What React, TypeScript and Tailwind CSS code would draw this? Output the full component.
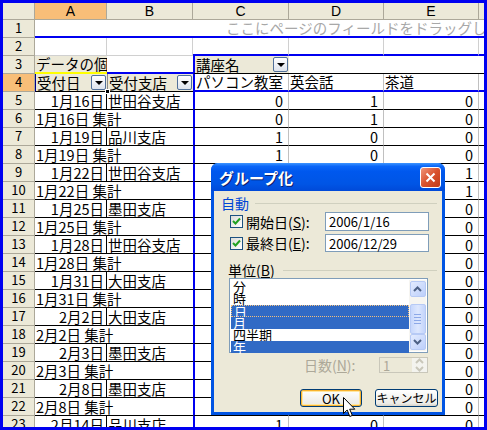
import React from 'react';

const JP = "font-['Noto_Sans_CJK_JP',sans-serif]";

// one spreadsheet detail / total row
type DataRow = { n: number; a?: string; b?: string; t?: string; c: string; d: string; e: string };

const rows: DataRow[] = [
  { n: 5, a: '1月16日', b: '世田谷支店', c: '0', d: '1', e: '0' },
  { n: 6, t: '1月16日 集計', c: '0', d: '1', e: '0' },
  { n: 7, a: '1月19日', b: '品川支店', c: '1', d: '0', e: '0' },
  { n: 8, t: '1月19日 集計', c: '1', d: '0', e: '0' },
  { n: 9, a: '1月22日', b: '世田谷支店', c: '0', d: '0', e: '1' },
  { n: 10, t: '1月22日 集計', c: '0', d: '0', e: '1' },
  { n: 11, a: '1月25日', b: '墨田支店', c: '1', d: '0', e: '0' },
  { n: 12, t: '1月25日 集計', c: '1', d: '0', e: '0' },
  { n: 13, a: '1月28日', b: '世田谷支店', c: '0', d: '1', e: '0' },
  { n: 14, t: '1月28日 集計', c: '0', d: '1', e: '0' },
  { n: 15, a: '1月31日', b: '大田支店', c: '1', d: '0', e: '0' },
  { n: 16, t: '1月31日 集計', c: '1', d: '0', e: '0' },
  { n: 17, a: '2月2日', b: '大田支店', c: '0', d: '1', e: '0' },
  { n: 18, t: '2月2日 集計', c: '0', d: '1', e: '0' },
  { n: 19, a: '2月3日', b: '墨田支店', c: '1', d: '0', e: '0' },
  { n: 20, t: '2月3日 集計', c: '1', d: '0', e: '0' },
  { n: 21, a: '2月8日', b: '墨田支店', c: '0', d: '1', e: '0' },
  { n: 22, t: '2月8日 集計', c: '0', d: '1', e: '0' },
  { n: 23, a: '2月14日', b: '品川支店', c: '1', d: '0', e: '0' },
];

const cell = 'box-border h-full shrink-0 flex items-end overflow-hidden whitespace-nowrap text-[14.5px] leading-[16px]';

function RowHead({ n, sel }: { n: number; sel?: boolean }) {
  return (
    <div
      className={`${cell} w-[32px] justify-center border-r border-b border-[#ACA899] !text-[13px] ${
        sel ? 'bg-[#F8BE78]' : 'bg-[#ECE9D8]'
      }`}
    >
      <span className="pb-[1px]">{n}</span>
    </div>
  );
}

function DropBtn() {
  return (
    <div className="ml-auto mb-[1px] mr-[1px] w-[15px] h-[15px] shrink-0 box-border rounded-[2px] border border-[#51709A] bg-[linear-gradient(180deg,#FFFFFF,#DDE3EC)] flex items-center justify-center">
      <div className="w-0 h-0 border-x-[4px] border-t-[4px] border-x-transparent border-t-black" />
    </div>
  );
}

function Check() {
  return (
    <div className="w-[13px] h-[13px] box-border border border-[#1C5180] bg-[linear-gradient(135deg,#DCDCD7,#FFFFFF)] flex items-center justify-center shrink-0">
      <svg width="9" height="9" viewBox="0 0 9 9">
        <path d="M1 4 L3.5 6.5 L8 1.5" stroke="#21A121" strokeWidth="2" fill="none" />
      </svg>
    </div>
  );
}

function Arrow({ up, color = '#4D6185' }: { up?: boolean; color?: string }) {
  return (
    <svg width="9" height="6" viewBox="0 0 9 6">
      <path d={up ? 'M1 5 L4.5 1.5 L8 5' : 'M1 1 L4.5 4.5 L8 1'} stroke={color} strokeWidth="2" fill="none" />
    </svg>
  );
}

function Dialog() {
  const items = [
    { t: '分' },
    { t: '時' },
    { t: '日', s: true, f: true },
    { t: '月', s: true },
    { t: '四半期' },
    { t: '年', s: true },
  ];
  return (
    <div className="absolute left-[208px] top-[160px] w-[234px] h-[252px] flex flex-col rounded-t-[7px] overflow-hidden bg-[#0054E3]">
      {/* title bar */}
      <div className="h-[28px] shrink-0 flex items-center pl-[8px] pr-[4px] bg-[linear-gradient(180deg,#3D95FF_0%,#0A66F8_12%,#0058EE_30%,#0055E5_75%,#0049D8_100%)]">
        <span className="text-white font-bold text-[15px] leading-none [text-shadow:1px_1px_0_#0A1E6C]">グループ化</span>
        <div className="ml-auto w-[21px] h-[21px] box-border rounded-[3px] border border-white bg-[linear-gradient(135deg,#F0967A,#D9522E_50%,#C13A17)] flex items-center justify-center">
          <svg width="11" height="11" viewBox="0 0 11 11">
            <path d="M1.5 1.5 L9.5 9.5 M9.5 1.5 L1.5 9.5" stroke="white" strokeWidth="2" />
          </svg>
        </div>
      </div>
      {/* body */}
      <div className="flex-1 mx-[3px] mb-[3px] bg-[#ECE9D8] flex flex-col pl-[7px] pr-[4px] text-[13px] leading-none">
        <div className="mt-[4px] h-[16px] flex items-center">
          <span className="text-[#0046D5] text-[14px]">自動</span>
          <div className="flex-1 h-px bg-[#D0D0BF] ml-[6px] mr-[1px]" />
        </div>
        <div className="mt-[1px] h-[19px] flex items-center">
          <div className="ml-[9px]"><Check /></div>
          <span className="ml-[3px] text-[14px]">
            開始日(<span className="underline">S</span>):
          </span>
          <div className="ml-auto mr-[9px] w-[104px] h-[19px] box-border border border-[#7F9DB9] bg-white flex items-center pl-[3px] text-[13px]">
            2006/1/16
          </div>
        </div>
        <div className="mt-[3px] h-[18px] flex items-center">
          <div className="ml-[9px]"><Check /></div>
          <span className="ml-[3px] text-[14px]">
            最終日(<span className="underline">E</span>):
          </span>
          <div className="ml-auto mr-[9px] w-[104px] h-[18px] box-border border border-[#7F9DB9] bg-white flex items-center pl-[3px] text-[13px]">
            2006/12/29
          </div>
        </div>
        <div className="mt-[12px] h-[12px] flex items-center">
          <span className="ml-[7px] text-[14px]">
            単位(<span className="underline">B</span>)
          </span>
          <div className="flex-1 h-px bg-[#D0D0BF] ml-[8px] mr-[1px]" />
        </div>
        <div className="mt-[2px] ml-[8px] w-[199px] h-[75px] box-border border border-[#7F9DB9] bg-white flex p-[1px]">
          <div className="flex-1 flex flex-col pt-[1px]">
            {items.map((it) => (
              <div
                key={it.t}
                className={`h-[12px] text-[13px] leading-[12px] box-border pl-[2px] ${
                  it.s ? 'bg-[#316AC5] text-white' : 'text-black'
                } ${it.f ? 'border border-dotted border-[#F0C080]' : ''}`}
              >
                {it.t}
              </div>
            ))}
          </div>
          <div className="w-[17px] bg-[#F6F5F1] flex flex-col items-center py-[1px]">
            <div className="w-[16px] h-[16px] box-border rounded-[2px] border border-[#B7CAF5] bg-[linear-gradient(135deg,#E3EBFE,#BCCFFB)] flex items-center justify-center">
              <Arrow up />
            </div>
            <div className="mt-[7px] w-[16px] h-[30px] box-border rounded-[2px] border border-[#B7CAF5] bg-[linear-gradient(90deg,#C7D7FC,#DDE7FE_50%,#C3D4FB)] flex flex-col items-center justify-center gap-[2px]">
              <div className="w-[7px] h-px bg-[#8CA8E8]" />
              <div className="w-[7px] h-px bg-[#8CA8E8]" />
              <div className="w-[7px] h-px bg-[#8CA8E8]" />
              <div className="w-[7px] h-px bg-[#8CA8E8]" />
            </div>
            <div className="mt-auto w-[16px] h-[16px] box-border rounded-[2px] border border-[#B7CAF5] bg-[linear-gradient(135deg,#E3EBFE,#BCCFFB)] flex items-center justify-center">
              <Arrow />
            </div>
          </div>
        </div>
        <div className="mt-[4px] h-[16px] flex items-center">
          <span className="ml-[83px] text-[#ACA899] text-[14px]">
            日数(<span className="underline">N</span>):
          </span>
          <div className="ml-auto mr-[10px] w-[49px] h-[16px] box-border border border-[#C9C7BA] bg-[#ECE9D8] flex items-center">
            <span className="pl-[3px] text-[#ACA899]">1</span>
            <div className="ml-auto w-[15px] h-full flex flex-col items-center justify-center gap-[2px] bg-[#F3F3EE]">
              <Arrow up color="#C9C7BA" />
              <Arrow color="#C9C7BA" />
            </div>
          </div>
        </div>
        <div className="mt-[16px] h-[18px] flex items-center justify-end gap-[13px]">
          <div className="w-[62px] h-[18px] box-border rounded-[3px] border border-[#003C74] bg-[linear-gradient(180deg,#FFFFFF,#ECEBE6_85%,#D6D0C5)] shadow-[inset_0_0_0_1px_#F8B330,inset_0_0_0_2px_#FFE7A2] flex items-center justify-center">
            OK
          </div>
          <div className="w-[63px] h-[18px] box-border rounded-[3px] border border-[#003C74] bg-[linear-gradient(180deg,#FFFFFF,#ECEBE6_85%,#D6D0C5)] flex items-center justify-center text-[12px]">
            キャンセル
          </div>
        </div>
      </div>
    </div>
  );
}

export default function App() {
  return (
    <div className={`w-[487px] h-[430px] box-border border-[3px] border-[#0000F0] relative overflow-hidden bg-white text-black ${JP}`}>
      {/* column headers */}
      <div className="flex h-[17px]">
        <div className={`${cell} w-[32px] bg-[#ECE9D8] border-r border-b border-[#ACA899]`} />
        {[
          ['A', 'w-[72px]', true],
          ['B', 'w-[86px]', false],
          ['C', 'w-[96px]', false],
          ['D', 'w-[95px]', false],
          ['E', 'w-[95px]', false],
        ].map(([l, w, s]) => (
          <div
            key={l as string}
            className={`${cell} ${w} justify-center items-center border-r border-b border-[#ACA899] font-['Liberation_Sans',sans-serif] !text-[14px] ${
              s ? 'bg-[#F8BE78]' : 'bg-[#ECE9D8]'
            }`}
          >
            {l}
          </div>
        ))}
        <div className={`${cell} w-[5px] bg-[#ECE9D8] border-b border-[#ACA899]`} />
      </div>

      {/* row 1: page field drop zone */}
      <div className="flex h-[18px]">
        <RowHead n={1} />
        <div className="box-border h-full w-[449px] border-b-2 border-[#0000F0] flex items-end overflow-hidden whitespace-nowrap pl-[191px] text-[14.5px] leading-[16px] text-[#A8A8A8]">
          ここにページのフィールドをドラッグします
        </div>
      </div>

      {/* row 2 */}
      <div className="flex h-[18px]">
        <RowHead n={2} />
        <div className={`${cell} w-[72px] border-r border-b border-[#D0D0D0]`} />
        <div className={`${cell} w-[86px] border-r border-b border-[#D0D0D0]`} />
        <div className={`${cell} w-[96px] border-r border-[#D0D0D0] border-b-2 border-b-[#0000F0]`} />
        <div className={`${cell} w-[95px] border-r border-[#D0D0D0] border-b-2 border-b-[#0000F0]`} />
        <div className={`${cell} w-[95px] border-r border-[#D0D0D0] border-b-2 border-b-[#0000F0]`} />
        <div className={`${cell} w-[5px] border-b-2 border-[#0000F0]`} />
      </div>

      {/* row 3 */}
      <div className="flex h-[18px]">
        <RowHead n={3} />
        <div className={`${cell} w-[72px] bg-[#ECE9D8] border-b-2 border-[#FFFF00] pl-[1px]`}>データの個数</div>
        <div className={`${cell} w-[86px] border-b-2 border-[#0000F0]`} />
        <div className={`${cell} w-[96px] border-l-2 border-[#0000F0] border-b border-b-black bg-[#ECE9D8] pl-[1px]`}>
          講座名
          <DropBtn />
        </div>
        <div className={`${cell} w-[95px] border-b border-black`} />
        <div className={`${cell} w-[95px] border-b border-black`} />
        <div className={`${cell} w-[5px] border-b border-black`} />
      </div>

      {/* row 4: row field buttons and column items */}
      <div className="flex h-[18px]">
        <RowHead n={4} sel />
        <div className={`${cell} relative !overflow-visible w-[72px] bg-[#ECE9D8] border-l border-[#00008A] border-b border-b-black pl-[1px]`}>
          受付日
          <DropBtn />
          <div className="absolute right-[-3px] bottom-[-3px] w-[5px] h-[5px] bg-black border border-white" />
        </div>
        <div className={`${cell} w-[86px] bg-[#ECE9D8] border-l border-[#8A8A8A] border-b border-b-black pl-[1px]`}>
          受付支店
          <DropBtn />
        </div>
        <div className={`${cell} w-[96px] border-l-2 border-[#0000F0] border-r border-r-[#C0C0C0] border-b-2 border-b-[#0000F0] pl-[1px]`}>
          パソコン教室
        </div>
        <div className={`${cell} w-[95px] border-r border-[#C0C0C0] border-b-2 border-b-[#0000F0] pl-[1px]`}>英会話</div>
        <div className={`${cell} w-[95px] border-r border-[#C0C0C0] border-b-2 border-b-[#0000F0] pl-[1px]`}>茶道</div>
        <div className={`${cell} w-[5px] border-b-2 border-[#0000F0]`} />
      </div>

      {/* data rows */}
      {rows.map((r) => (
        <div key={r.n} className="flex h-[18px]">
          <RowHead n={r.n} />
          {r.t ? (
            <div className={`${cell} w-[158px] border-b border-black pl-[1px]`}>{r.t}</div>
          ) : (
            <>
              <div className={`${cell} w-[72px] justify-end border-r border-b border-black pr-[2px]`}>{r.a}</div>
              <div className={`${cell} w-[86px] border-b border-black pl-[1px]`}>{r.b}</div>
            </>
          )}
          <div className={`${cell} w-[96px] justify-end border-l-2 border-[#0000F0] border-r border-r-[#C0C0C0] border-b border-b-black pr-[5px]`}>
            {r.c}
          </div>
          <div className={`${cell} w-[95px] justify-end border-r border-[#C0C0C0] border-b border-b-black pr-[5px]`}>{r.d}</div>
          <div className={`${cell} w-[95px] justify-end border-r border-[#C0C0C0] border-b border-b-black pr-[5px]`}>{r.e}</div>
          <div className={`${cell} w-[5px] border-b border-black`} />
        </div>
      ))}

      <Dialog />

      {/* mouse pointer */}
      <svg className="absolute left-[340px] top-[394px]" width="13" height="21" viewBox="0 0 13 21">
        <path d="M0.5 0.5 L0.5 16.5 L4.2 13 L6.8 19.5 L9.3 18.4 L6.7 12.2 L11.8 12.2 Z" fill="white" stroke="black" strokeWidth="1" />
      </svg>
    </div>
  );
}
